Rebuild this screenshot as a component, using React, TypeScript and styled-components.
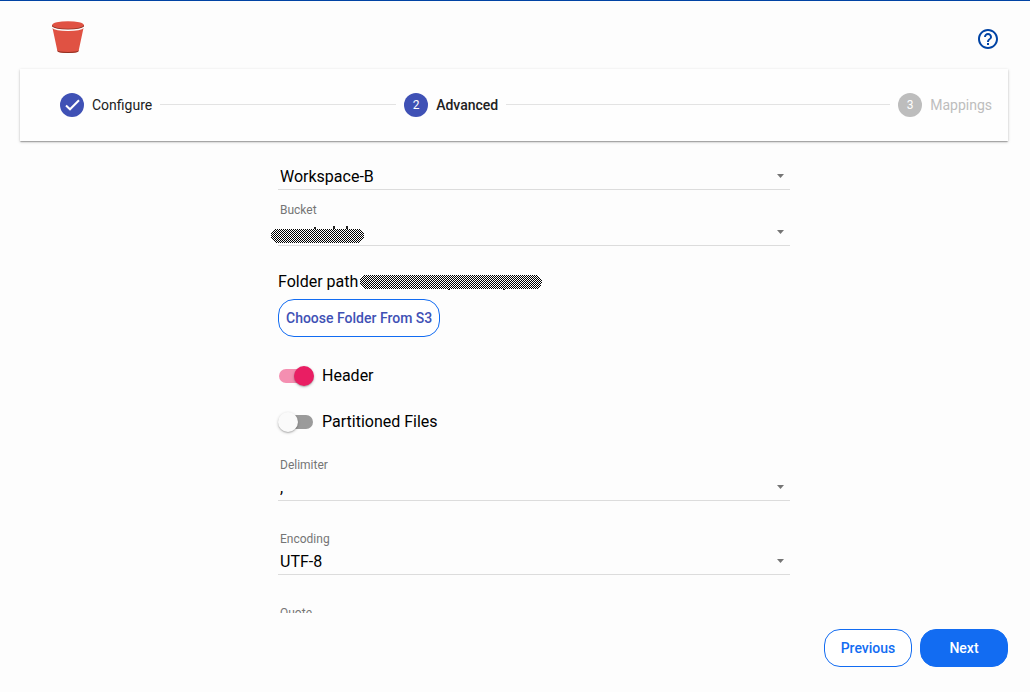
import React, { useId, useState } from "react";
import styled, { createGlobalStyle } from "styled-components";

const GlobalStyle = createGlobalStyle`
  *, *::before, *::after { box-sizing: border-box; }
  body {
    margin: 0;
    background: #fdfdfd;
    color: #000;
    font-family: Roboto, "Liberation Sans", sans-serif;
    font-size: 16px;
    line-height: 24px;
  }
`;

const Page = styled.div`
  display: flex;
  flex-direction: column;
  height: 100vh;
  border-top: 1px solid #0043a4;
  padding: 0 22px 0 20px;
`;

const Header = styled.header`
  display: flex;
  align-items: center;
  justify-content: space-between;
  flex: none;
  padding: 20px 8px 16px 32px;
`;

const HelpButton = styled.button`
  display: flex;
  padding: 4px 0 0;
  border: 0;
  background: none;
  color: #0043a4;
  cursor: pointer;
`;

const Stepper = styled.ol`
  display: flex;
  align-items: center;
  flex: none;
  gap: 8px;
  margin: 0;
  padding: 24px 16px 24px 40px;
  list-style: none;
  background: #fefefe;
  box-shadow: 0 1px 3px rgba(0, 0, 0, 0.2), 0 1px 1px rgba(0, 0, 0, 0.14),
    0 2px 1px -1px rgba(0, 0, 0, 0.12);
`;

type StepState = "done" | "active" | "pending";

const Step = styled.li<{ $state: StepState }>`
  display: flex;
  align-items: center;
  gap: 8px;
  font-size: 14px;
  font-weight: ${(p) => (p.$state === "active" ? 500 : 400)};
  color: ${(p) => (p.$state === "pending" ? "#bdbdbd" : "#212121")};
`;

const StepBadge = styled.span<{ $state: StepState }>`
  display: flex;
  align-items: center;
  justify-content: center;
  width: 24px;
  height: 24px;
  border-radius: 50%;
  background: ${(p) => (p.$state === "pending" ? "#bdbdbd" : "#3f51b5")};
  color: #fff;
  font-size: 12px;
  font-weight: 400;
`;

const Connector = styled.li<{ $grow: number }>`
  flex: ${(p) => p.$grow} 1 0;
  height: 2px;
  border-top: 1px solid #e3e3e3;
`;

const ScrollArea = styled.main`
  flex: 1;
  min-height: 0;
  overflow: hidden;
  padding: 23px 0 0 40px;
`;

const Form = styled.form`
  display: flex;
  flex-direction: column;
  max-width: 512px;
  margin: 0 auto;
`;

const Group = styled.div<{ $gap: number; $top?: number }>`
  display: flex;
  flex-direction: column;
  align-items: stretch;
  gap: ${(p) => p.$gap}px;
  margin-top: ${(p) => p.$top ?? 0}px;
`;

const Field = styled.div`
  display: flex;
  flex-direction: column;
  gap: 2px;
`;

const FieldLabel = styled.label`
  padding-left: 2px;
  font-size: 12px;
  line-height: 16px;
  color: #757575;
`;

const Control = styled.div`
  position: relative;
  display: flex;
  align-items: center;
  height: 26px;
  border-bottom: 1px solid #dcdcdc;
`;

const Select = styled.select`
  appearance: none;
  width: 100%;
  height: 24px;
  padding: 0 24px 0 2px;
  border: 0;
  outline: 0;
  background: transparent;
  color: #000;
  font: inherit;
  line-height: 24px;
`;

const Caret = styled.svg`
  position: absolute;
  right: 6px;
  top: 10px;
  pointer-events: none;
`;

const CoverSlot = styled.span`
  position: absolute;
  left: -7px;
  top: 7px;
  display: flex;
`;

const Cover = styled.svg`
  flex: none;
  overflow: visible;
`;

const PathRow = styled.p`
  display: flex;
  align-items: center;
  gap: 2px;
  margin: 0;
`;

const Button = styled.button<{ $filled?: boolean; $wide?: boolean }>`
  height: 38px;
  min-width: 88px;
  align-self: flex-start;
  padding: 0 7px;
  border: 1px solid #126cf2;
  border-radius: 16px;
  background: ${(p) => (p.$filled ? "#126cf2" : "#fff")};
  color: ${(p) => (p.$filled ? "#fff" : p.$wide ? "#3f51b5" : "#126cf2")};
  font-family: inherit;
  font-size: 14px;
  font-weight: 500;
  cursor: pointer;
`;

const SwitchLabel = styled.label`
  display: flex;
  align-items: center;
  align-self: flex-start;
  gap: 8px;
  height: 38px;
  cursor: pointer;
`;

const SwitchInput = styled.input`
  appearance: none;
  position: relative;
  display: flex;
  align-items: center;
  width: 36px;
  height: 20px;
  margin: 0;

  &::before {
    content: "";
    width: 34px;
    height: 14px;
    margin: 0 1px;
    border-radius: 7px;
    background: #9b9b9b;
  }

  &::after {
    content: "";
    position: absolute;
    left: 0;
    top: 0;
    width: 20px;
    height: 20px;
    border-radius: 50%;
    background: #fafafa;
    box-shadow: 0 1px 3px rgba(0, 0, 0, 0.24), 0 1px 1px rgba(0, 0, 0, 0.14);
  }

  &:checked::before {
    background: #f48fb1;
  }

  &:checked::after {
    left: 16px;
    background: #e91e63;
  }
`;

const Footer = styled.footer`
  display: flex;
  flex: none;
  justify-content: flex-end;
  gap: 8px;
  padding: 16px 0 25px;
`;

const BucketLogo = () => (
  <svg width="32" height="32" viewBox="0 0 32 32" role="img" aria-label="Amazon S3">
    <path d="M0.5 7 Q16 11.5 31.5 7 L26.6 30 Q26 32 16 32 Q6 32 5.4 30Z" fill="#e05243" />
    <path d="M5.3 29.3 Q6 31 16 31 Q26 31 26.7 29.3 L26.5 30.3 Q25.5 32 16 32 Q6.5 32 5.5 30.3Z" fill="#8c3123" />
    <path d="M0.3 6 Q3 9.3 16 9.3 Q29 9.3 31.7 6" fill="none" stroke="#fdfdfd" strokeWidth="1.4" />
    <path d="M0 4 V5.5 Q3 8.5 16 8.5 Q29 8.5 32 5.5 V4Z" fill="#8c3123" />
    <ellipse cx="16" cy="4" rx="15.8" ry="3.8" fill="#e05243" />
  </svg>
);

const HelpIcon = () => (
  <svg width="24" height="24" viewBox="0 0 24 24" fill="currentColor" aria-hidden="true">
    <path d="M11 18h2v-2h-2v2zm1-16C6.48 2 2 6.48 2 12s4.48 10 10 10 10-4.48 10-10S17.52 2 12 2zm0 18c-4.41 0-8-3.59-8-8s3.59-8 8-8 8 3.59 8 8-3.59 8-8 8zm0-14c-2.21 0-4 1.79-4 4h2c0-1.1.9-2 2-2s2 .9 2 2c0 2-3 1.75-3 5h2c0-2.25 3-2.5 3-5 0-2.210-1.790-4-4-4z" />
  </svg>
);

const CheckIcon = () => (
  <svg width="24" height="24" viewBox="0 0 24 24" fill="none" stroke="#fff" strokeWidth="2" role="img" aria-label="Completed">
    <path d="M6 12.5L10 16.300L19 7.200" />
  </svg>
);

/* Dithered pill that hides a private value; marks are the strokes left showing at its edge. */
function Redaction({ width, marks }: { width: number; marks: [number, number, number][] }) {
  const id = useId();
  return (
    <Cover width={width} height="18" viewBox={`0 0 ${width} 18`} role="img" aria-label="Hidden value" shapeRendering="crispEdges">
      <defs>
        <pattern id={id} width="2" height="2" patternUnits="userSpaceOnUse">
          <rect width="2" height="2" fill="#fff" />
          <rect width="1" height="1" />
          <rect x="1" y="1" width="1" height="1" />
        </pattern>
      </defs>
      {marks.map(([x, y, h]) => (
        <rect key={x} x={x} y={y} width="2" height={h} fill="#222" />
      ))}
      <rect y="2" width={width} height="14" rx="7" fill={`url(#${id})`} />
    </Cover>
  );
}

function SelectField({
  label,
  name,
  value,
  hideLabel,
  children,
}: {
  label: string;
  name: string;
  value: string;
  hideLabel?: boolean;
  children?: React.ReactNode;
}) {
  return (
    <Field>
      {!hideLabel && <FieldLabel htmlFor={name}>{label}</FieldLabel>}
      <Control>
        <Select id={name} name={name} defaultValue={value} aria-label={hideLabel ? label : undefined}>
          <option value={value}>{value}</option>
        </Select>
        {children && <CoverSlot>{children}</CoverSlot>}
        <Caret width="7" height="4" viewBox="0 0 7 4" aria-hidden="true">
          <path d="M0 0H7L3.500 4Z" fill="#757575" />
        </Caret>
      </Control>
    </Field>
  );
}

function Switch({ label, initial }: { label: string; initial: boolean }) {
  const [on, setOn] = useState(initial);
  return (
    <SwitchLabel>
      <SwitchInput type="checkbox" role="switch" checked={on} onChange={() => setOn(!on)} />
      {label}
    </SwitchLabel>
  );
}

export default function App() {
  return (
    <>
      <GlobalStyle />
      <Page>
        <Header>
          <BucketLogo />
          <HelpButton type="button" aria-label="Help">
            <HelpIcon />
          </HelpButton>
        </Header>
        <Stepper>
          <Step $state="done">
            <StepBadge $state="done">
              <CheckIcon />
            </StepBadge>
            Configure
          </Step>
          <Connector $grow={59} aria-hidden="true" />
          <Step $state="active" aria-current="step">
            <StepBadge $state="active">2</StepBadge>
            Advanced
          </Step>
          <Connector $grow={96} aria-hidden="true" />
          <Step $state="pending">
            <StepBadge $state="pending">3</StepBadge>
            Mappings
          </Step>
        </Stepper>
        <ScrollArea>
          <Form id="advanced" onSubmit={(e) => e.preventDefault()}>
            <Group $gap={12}>
              <SelectField label="Workspace" name="workspace" value="Workspace-B" hideLabel />
              <SelectField label="Bucket" name="bucket" value="">
                <Redaction width={93} marks={[[43, 0, 2], [62, -1, 3], [75, -1, 3]]} />
              </SelectField>
            </Group>
            <Group $gap={5} $top={24}>
              <PathRow>
                Folder path
                <Redaction width={182} marks={[[88, 16, 1], [143, 16, 1]]} />
              </PathRow>
              <Button type="button" $wide>
                Choose Folder From S3
              </Button>
            </Group>
            <Group $gap={8} $top={20}>
              <Switch label="Header" initial />
              <Switch label="Partitioned Files" initial={false} />
            </Group>
            <Group $gap={30} $top={16}>
              <SelectField label="Delimiter" name="delimiter" value="," />
              <SelectField label="Encoding" name="encoding" value="UTF-8" />
              <SelectField label="Quote" name="quote" value="" />
            </Group>
          </Form>
        </ScrollArea>
        <Footer>
          <Button type="button">Previous</Button>
          <Button type="submit" form="advanced" $filled>
            Next
          </Button>
        </Footer>
      </Page>
    </>
  );
}
